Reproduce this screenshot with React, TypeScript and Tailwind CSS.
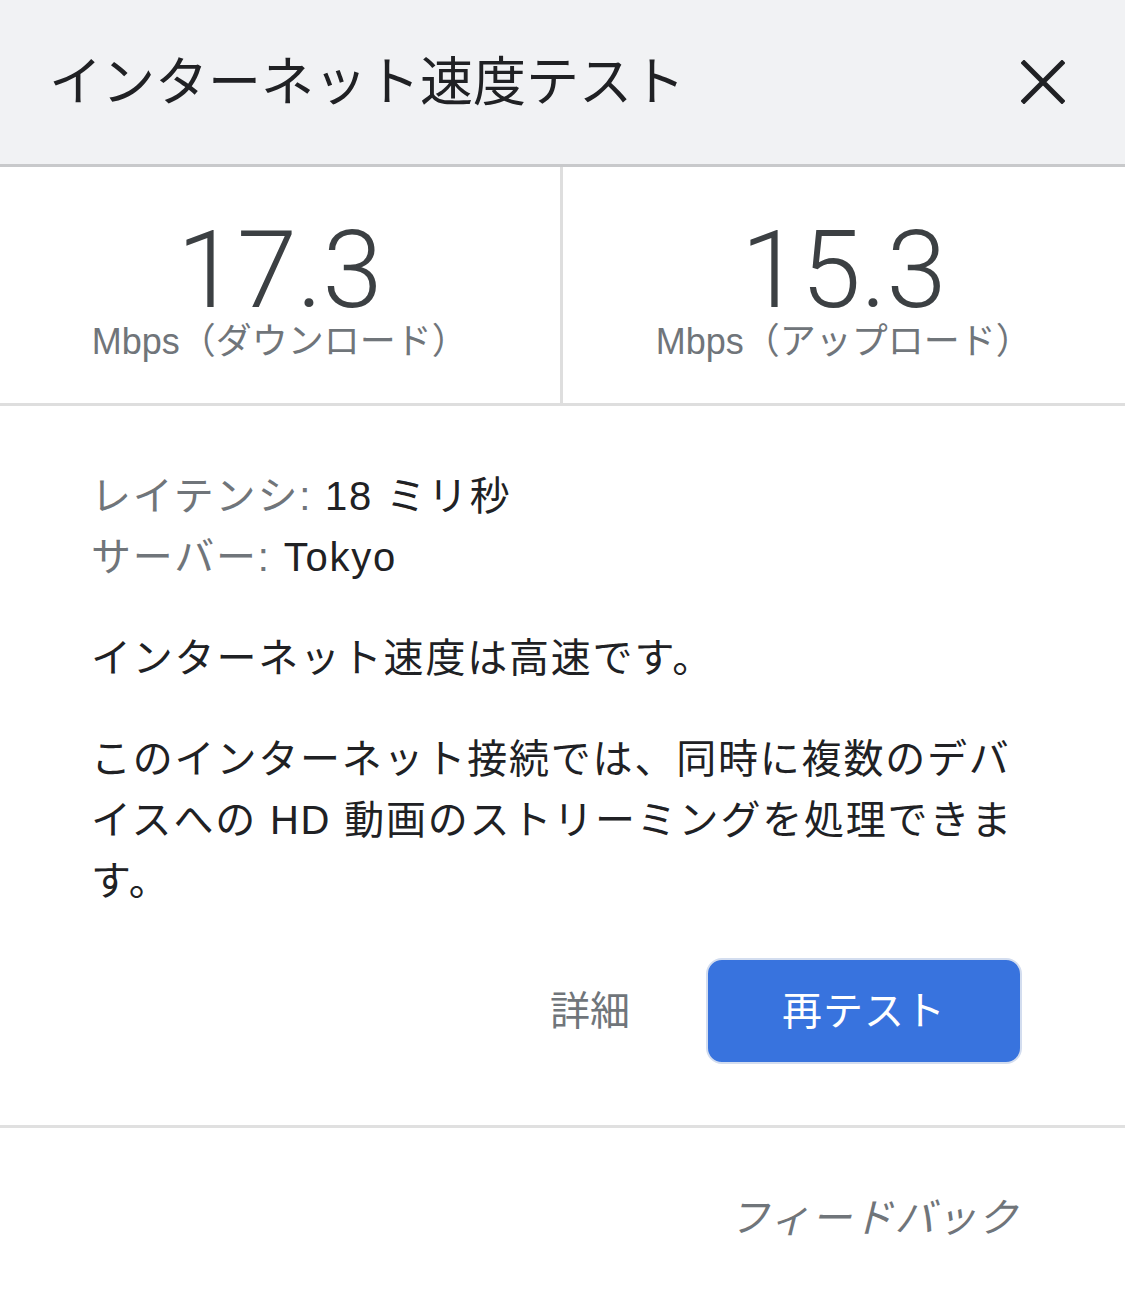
import React from 'react'

const FONT = { fontFamily: '"Liberation Sans", "Noto Sans CJK JP", sans-serif' }

const CloseIcon = () => (
  <svg width="44" height="44" viewBox="0 0 44 44" className="text-[#202124]">
    <path d="M3 3 L41 41 M41 3 L3 41" stroke="currentColor" strokeWidth="5" strokeLinecap="square" fill="none" />
  </svg>
)

const Metric = ({ value, label, divider }: { value: string; label: string; divider?: boolean }) => (
  <div className={`flex flex-col items-center pt-[60px] ${divider ? 'border-r-[3px] border-[#dedede]' : ''}`}>
    <div className="font-['Roboto',sans-serif] font-light text-[108px] leading-[86px] text-[#3c4043]">{value}</div>
    <div className="mt-[11px] text-[36px] leading-[36px] text-[#70757a] whitespace-nowrap">{label}</div>
  </div>
)

export default function App() {
  return (
    <div className="w-[1125px] h-[1293px] bg-white overflow-hidden" style={FONT}>
      <header className="h-[167px] bg-[#f1f2f4] border-b-[3px] border-[#c8c9cb] flex items-center justify-between pl-[49px] pr-[60px]">
        <h1 className="text-[53px] leading-none text-[#202124] font-normal">インターネット速度テスト</h1>
        <CloseIcon />
      </header>

      <section className="grid grid-cols-2 h-[239px] border-b-[3px] border-[#dedede]">
        <Metric value="17.3" label="Mbps（ダウンロード）" divider />
        <Metric value="15.3" label="Mbps（アップロード）" />
      </section>

      <section className="pl-[91px] pr-[80px] pt-[60px] text-[40px] leading-[61px] tracking-[1.8px] text-[#202124]">
        <div>
          <span className="text-[#70757a]">レイテンシ:</span> 18 ミリ秒
        </div>
        <div>
          <span className="text-[#70757a]">サーバー:</span> Tokyo
        </div>
        <p className="mt-[40px]">インターネット速度は高速です。</p>
        <p className="mt-[40px] whitespace-nowrap">
          このインターネット接続では、同時に複数のデバ
          <br />
          イスへの HD 動画のストリーミングを処理できま
          <br />
          す。
        </p>
      </section>

      <div className="flex justify-end items-center gap-[76px] pr-[103px] pt-[46px] pb-[61px]">
        <button className="text-[40px] leading-none text-[#70757a]">詳細</button>
        <button className="w-[316px] h-[106px] rounded-[16px] border-[2px] border-[#d3ddef] bg-[#3873de] text-white text-[40px] leading-none tracking-[1px]">
          再テスト
        </button>
      </div>

      <div className="border-t-[3px] border-[#e0e0e0] flex justify-end pr-[106px] pt-[70px]">
        <span className="text-[40px] leading-none italic tracking-[1.5px] text-[#70757a]">フィードバック</span>
      </div>
    </div>
  )
}
